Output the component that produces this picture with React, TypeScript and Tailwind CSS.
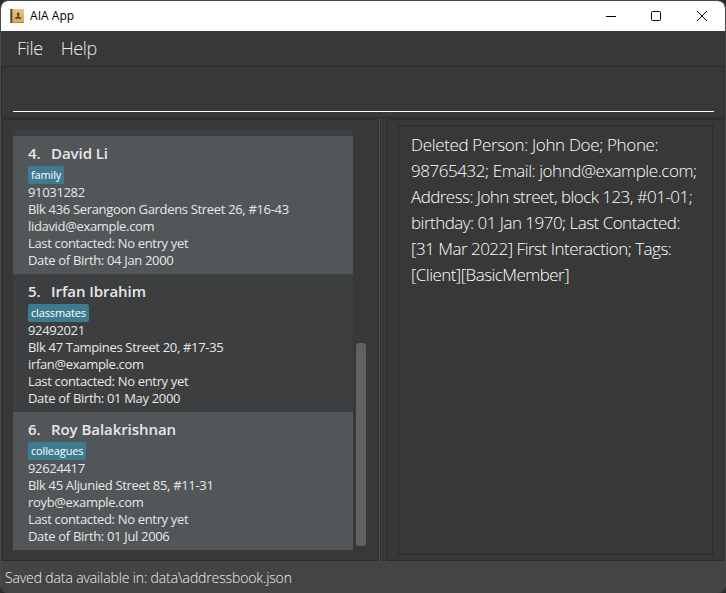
import { clsx } from "clsx";

type Person = {
  index: number;
  name: string;
  tag: string;
  phone: string;
  address: string;
  email: string;
  birth: string;
};

const people: Person[] = [
  { index: 4, name: "David Li", tag: "family", phone: "91031282", address: "Blk 436 Serangoon Gardens Street 26, #16-43", email: "lidavid@example.com", birth: "04 Jan 2000" },
  { index: 5, name: "Irfan Ibrahim", tag: "classmates", phone: "92492021", address: "Blk 47 Tampines Street 20, #17-35", email: "irfan@example.com", birth: "01 May 2000" },
  { index: 6, name: "Roy Balakrishnan", tag: "colleagues", phone: "92624417", address: "Blk 45 Aljunied Street 85, #11-31", email: "royb@example.com", birth: "01 Jul 2006" },
];

const resultLines = [
  { text: "Deleted Person: John Doe; Phone:", tracking: "tracking-[-0.34px]" },
  { text: "98765432; Email: johnd@example.com;", tracking: "tracking-[-0.44px]" },
  { text: "Address: John street, block 123, #01-01;", tracking: "tracking-[-0.55px]" },
  { text: "birthday: 01 Jan 1970; Last Contacted:", tracking: "tracking-[-0.52px]" },
  { text: "[31 Mar 2022] First Interaction; Tags:", tracking: "tracking-[-0.5px]" },
  { text: "[Client][BasicMember]", tracking: "tracking-[-0.55px]" },
];

function AppIcon() {
  return (
    <svg width="14" height="14" viewBox="0 0 14 14" className="mb-px shrink-0">
      <defs>
        <linearGradient id="cover" x1="0" y1="0" x2="0" y2="1">
          <stop offset="0" stopColor="#e6c58a" />
          <stop offset="1" stopColor="#dba650" />
        </linearGradient>
      </defs>
      <rect x="0" y="0" width="14" height="14" rx="0.6" fill="url(#cover)" />
      <rect x="0" y="0" width="1" height="14" fill="#8f7a62" />
      <rect x="1" y="0" width="1" height="14" fill="#54402f" />
      <rect x="2" y="0" width="1" height="14" fill="#a8906c" />
      <rect x="3" y="13" width="11" height="1" fill="#bd852f" />
      <rect x="7" y="3.500" width="2.400" height="3.200" rx="1" fill="#5a4322" />
      <path d="M7.500 6h1.400v1.700l2.300.6v1.500H5.200V8.300l2.300-.6z" fill="#5a4322" />
    </svg>
  );
}

function TitleBar() {
  return (
    <header className="flex h-[30px] shrink-0 items-center rounded-t-[7px] bg-white pl-[9px] pr-[18px] text-black">
      <AppIcon />
      <h1 className="ml-[6px] grow text-[12px] leading-4 tracking-[0.05px]">AIA App</h1>
      <div className="mb-px flex items-center gap-[35px]">
        <svg width="10" height="10" viewBox="0 0 10 10">
          <path d="M0 5.500h10" stroke="#000" />
        </svg>
        <svg width="10" height="10" viewBox="0 0 10 10" fill="none" className="mr-px">
          <rect x="0.5" y="0.5" width="9" height="9" rx="1" stroke="#000" />
        </svg>
        <svg width="10" height="10" viewBox="0 0 10 10" className="overflow-visible">
          <path d="M0 0l10 10M10 0L0 10" stroke="#000" />
        </svg>
      </div>
    </header>
  );
}

function PersonCard({ person, shaded }: { person: Person; shaded: boolean }) {
  return (
    <li className={clsx("h-[138px] pl-[15px] pt-[7px] text-[13px] leading-[17px] tracking-[-0.33px] text-[#e8e8e8]", shaded ? "bg-[#515658]" : "bg-[#3c3e3f]")}>
      <h2 className="flex h-[23px] text-[15px] font-semibold leading-[21px] tracking-[-0.06px]">
        <span className="w-[23px]">{person.index}.</span>
        {person.name}
      </h2>
      <div className="flex h-[18px]">
        <span className="h-[18px] rounded-[2px] bg-[#3e7b91] px-[3px] text-[11px] leading-[18px] tracking-[-0.15px] text-white">{person.tag}</span>
      </div>
      <p>{person.phone}</p>
      <p>{person.address}</p>
      <p>{person.email}</p>
      <p>Last contacted: No entry yet</p>
      <p>Date of Birth: {person.birth}</p>
    </li>
  );
}

export default function App() {
  return (
    <div className="h-[593px] w-[726px] overflow-hidden bg-[#2b2b2b] font-['Open_Sans','Noto_Sans',sans-serif] whitespace-nowrap">
      <div className="flex h-full flex-col overflow-hidden rounded-[8px] border border-[#494949] border-b-0 bg-[#383838]">
        <TitleBar />
        <nav className="flex h-[35px] shrink-0 items-center gap-[18px] pl-4 text-[18px] font-light tracking-[-0.35px] text-[#ececec]">
          <span>File</span>
          <span>Help</span>
        </nav>
        <div className="flex h-[52px] shrink-0 flex-col justify-end border border-[#2b2b2b] px-[11px] pb-[5px]">
          <div className="mr-[-1px] h-px bg-white" />
        </div>
        <main className="mt-px flex h-[442px] shrink-0 px-px">
          <section className="flex w-[377px] border border-[#2b2b2b] pl-[10px] pt-[10px]">
            <ul className="h-[420px] w-[340px] bg-[#3c3e3f] pt-[6px]">
              {people.map((p, i) => (
                <PersonCard key={p.index} person={p} shaded={i % 2 === 0} />
              ))}
            </ul>
            <div className="ml-[3px] mt-[213px] h-[203px] w-[10px] rounded-[3px] bg-[#616161]" />
          </section>
          <div className="mr-[7px] w-px bg-[#4f4f4f]" />
          <section className="flex grow border border-[#2b2b2b] pb-[5px] pl-[10px] pr-[10px] pt-[5px]">
            <div className="grow border border-[#2b2b2b] pl-3 pt-[6px] text-[17px] font-light leading-[26px] text-white">
              {resultLines.map((line) => (
                <p key={line.text} className={line.tracking}>{line.text}</p>
              ))}
            </div>
          </section>
        </main>
        <footer className="flex grow items-center bg-[#444444] pl-1 text-[14px] font-light tracking-[-0.13px] text-[#eeeeee]">
          Saved data available in: data\addressbook.json
        </footer>
      </div>
    </div>
  );
}
